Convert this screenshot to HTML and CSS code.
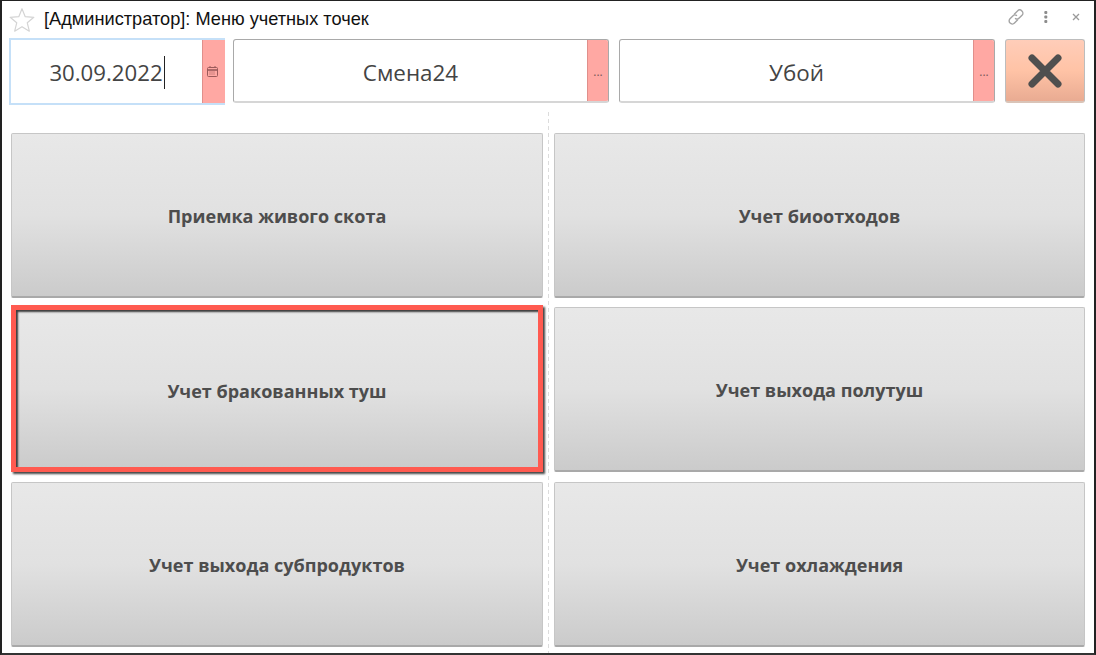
FILE: index.html
```html
<!DOCTYPE html>
<html lang="ru">
<head>
<meta charset="utf-8">
<title>Меню учетных точек</title>
<link rel="stylesheet" href="styles.css">
</head>
<body>
<div class="window">
  <header class="titlebar">
    <svg class="star" width="28" height="28" viewBox="0 0 26 26"><path d="M13 2.500l3 7.400 8 .6-6.100 5.100 1.900 7.800-6.800-4.200-6.800 4.200 1.900-7.800L2 10.500l8-.6z" fill="#fff" stroke="#d4d4d4" stroke-width="1.100" stroke-linejoin="round"/></svg>
    <div class="title">[Администратор]: Меню учетных точек</div>
    <div class="tools">
      <svg class="tool-link" width="20" height="20" viewBox="0 0 20 20" fill="none" stroke="#a3a3a3" stroke-width="1.400" stroke-linecap="round"><path d="M8.500 7l3-3a3 3 0 0 1 4.500 4.300l-2.800 2.800a3 3 0 0 1-3.700.5"/><path d="M11.500 13l-3 3a3 3 0 0 1-4.500-4.300l2.800-2.800a3 3 0 0 1 3.700-.5"/></svg>
      <svg class="tool-more" width="6" height="14" viewBox="0 0 6 14" fill="#8c8c8c"><rect x="1.300" y="1" width="3" height="3" rx="1"/><rect x="1.300" y="5.500" width="3" height="3" rx="1"/><rect x="1.300" y="10" width="3" height="3" rx="1"/></svg>
      <svg width="10" height="10" viewBox="0 0 10 10" stroke="#9a9a9a" stroke-width="1.300"><path d="M2 2l6 6M8 2l-6 6"/></svg>
    </div>
  </header>
  <div class="fields">
    <div class="field field-focus">
      <div class="value"><span class="caret-wrap">30.09.2022</span></div>
      <div class="side">
        <svg class="cal" width="11" height="11" viewBox="0 0 11 11" fill="none" stroke="#9c5a5a" stroke-width="1"><rect x=".5" y="1.500" width="10" height="9" rx="1"/><path d="M.5 4h10" stroke-width="1.600"/><path d="M2.500 6h6M2.500 8h6" stroke-dasharray="1 1"/><path d="M3 0v2M8 0v2"/></svg>
      </div>
    </div>
    <div class="field field-shift">
      <div class="value">Смена24</div>
      <div class="side"><span class="dots">...</span></div>
    </div>
    <div class="field">
      <div class="value">Убой</div>
      <div class="side"><span class="dots">...</span></div>
    </div>
    <button class="close" aria-label="Закрыть">
      <svg width="34" height="34" viewBox="0 0 34 34" stroke="#4f4f4f" stroke-width="7" stroke-linecap="round"><path d="M4 4l26 26M30 4L4 30"/></svg>
    </button>
  </div>
  <main class="menu">
    <button class="tile">Приемка живого скота</button>
    <button class="tile">Учет биоотходов</button>
    <button class="tile tile-selected">Учет бракованных туш</button>
    <button class="tile">Учет выхода полутуш</button>
    <button class="tile">Учет выхода субпродуктов</button>
    <button class="tile">Учет охлаждения</button>
  </main>
</div>
</body>
</html>
```
FILE: styles.css
```css
* { box-sizing: border-box; }
html, body { margin: 0; padding: 0; height: 100%; background: #fff; overflow: hidden; }
.window {
  width: 1096px;
  height: 655px;
  border-top: 1px solid #222;
  border-left: 2px solid #222;
  border-right: 2px solid #222;
  border-bottom: 2px solid #333;
  background: #fff;
  display: flex;
  flex-direction: column;
}
.titlebar {
  height: 38px;
  display: flex;
  align-items: center;
  padding: 0 13px 1px 6px;
  flex: none;
}
.star { flex: none; }
.title {
  font: 18.2px "Liberation Sans", Arial, sans-serif;
  color: #111;
  margin-left: 8px;
  flex: 1;
}
.tools { display: flex; align-items: center; padding-bottom: 6px; }
.tool-link { margin-right: 17px; }
.tool-more { margin-right: 22px; }
.fields {
  display: flex;
  column-gap: 10px;
  height: 65px;
  padding-left: 7px;
  flex: none;
}
.field {
  display: flex;
  width: 376px;
  height: 64px;
  border: 1px solid #a9a9a9;
  border-bottom: 2px solid #d6d6d6;
  border-radius: 3px;
  overflow: hidden;
  background: #fff;
}
.field-focus {
  width: 216px;
  height: 67px;
  margin: -1px -2px 0 0;
  border: 2px solid #c5e0f8;
  border-right: none;
  border-radius: 0;
}
.value {
  flex: 1;
  display: flex;
  align-items: center;
  justify-content: center;
  padding-top: 4px;
  font: 22.4px "Open Sans", sans-serif;
  color: #444;
}
.field-focus .value { font-size: 22.2px; padding: 2px 0 0 1px; }
.caret-wrap { border-right: 1px solid #222; line-height: 33px; padding-right: 1px; }
.side {
  width: 21px;
  flex: none;
  background: #ffa8a3;
  border-left: 1px solid #e08f8b;
  display: flex;
  align-items: center;
  justify-content: center;
}
.field-focus .side { width: 23px; }
.cal { margin-right: 3px; }
.dots { font: 12px "Open Sans", sans-serif; color: #7c5a5a; line-height: 1; margin-top: 3px; }
.close {
  width: 80px;
  height: 64px;
  padding: 0;
  border: 1px solid #bdbdbd;
  border-bottom: 2px solid #d9c4b8;
  border-radius: 3px;
  background: linear-gradient(#ffcdb9 0%, #ffc3a6 50%, #e9ab92 100%);
  display: flex;
  align-items: center;
  justify-content: center;
}
.menu {
  flex: 1;
  display: grid;
  grid-template-columns: 532px 531px;
  grid-template-rows: 165px 166px 165px;
  column-gap: 11px;
  row-gap: 9px;
  padding: 29px 0 0 9px;
  background:
    repeating-linear-gradient(#dcdcdc 0 4px, transparent 4px 7px) 546px 8px / 1px 100% no-repeat;
}
.tile {
  font: 700 18.05px "Open Sans", sans-serif;
  color: #4d4d4d;
  border: 1px solid #c6c6c6;
  border-bottom: 2px solid #a9a9a9;
  border-radius: 2px;
  background: linear-gradient(#e8e8e8 0%, #e1e1e1 50%, #cbcbcb 100%);
  padding: 2px 0 0;
  height: 165px;
}
.tile-selected {
  height: 167px;
  margin-top: -2px;
  border: 5px solid #ff5a50;
  border-radius: 0;
  padding-top: 4px;
  box-shadow: inset 2px 2px 2px #3c3c3c, 2px 2px 2px #444;
}
```
